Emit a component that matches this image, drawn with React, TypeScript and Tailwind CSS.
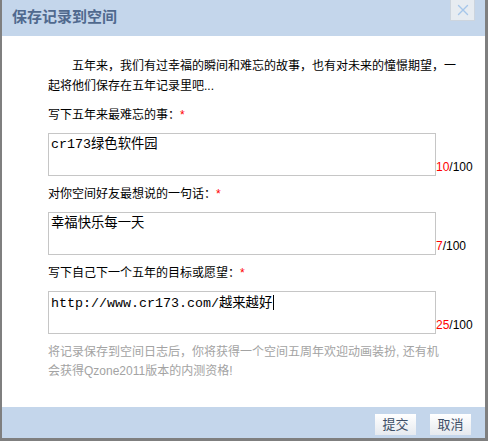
import React from "react";

const cjk = { fontFamily: '"Liberation Sans", "Noto Sans CJK SC", sans-serif' };
const mono = { fontFamily: '"Liberation Mono", "Noto Sans CJK SC", monospace' };

function Field({ label, value, count, caret }: { label: string; value: string; count: string; caret?: boolean }) {
  return (
    <div className="flex flex-col">
      <div className="h-[20px] leading-[20px] text-[12px] text-black">
        {label}
        <span className="text-[#ff0000]">*</span>
      </div>
      <div className="mt-[8px] flex items-end">
        <div
          className="w-[388px] h-[43px] border border-[#c6c6c6] bg-white px-[2px] pt-[3px] text-[13.333px] leading-[16px] text-black"
          style={mono}
        >
          {value}
          {caret && <span className="inline-block w-[1px] h-[15px] bg-black align-[-3px] ml-[1px]" />}
        </div>
        <div className="text-[12px] leading-[14px] mb-[2px]" style={cjk}>
          <span className="text-[#ff0000]">{count}</span>
          <span className="text-black">/100</span>
        </div>
      </div>
    </div>
  );
}

export default function App() {
  return (
    <div className="w-[488px] h-[441px] bg-[#7f7f7f] overflow-hidden pl-[2px]" style={cjk}>
      <div className="w-[483px] h-[438px] bg-white flex flex-col">
        <div className="h-[36px] bg-[#c4d6eb] flex items-start justify-between">
          <div className="pl-[10px] pt-[7px] text-[15px] leading-[20px] font-bold text-[#50698e]">保存记录到空间</div>
          <div className="mr-[10px] w-[25px] h-[21px] bg-[#e7ecf1] border border-[#cdd5de] border-t-0 flex items-center justify-center">
            <svg width="12" height="12" viewBox="0 0 12 12">
              <path d="M1.5 1.5 L10.5 10.5 M10.5 1.5 L1.5 10.5" stroke="#a6c6ea" strokeWidth="1.4" strokeLinecap="round" />
            </svg>
          </div>
        </div>
        <div className="flex-1 flex flex-col pl-[46px] pt-[20px]">
          <p className="w-[412px] text-[12px] leading-[20px] text-black indent-[24px]">
            五年来，我们有过幸福的瞬间和难忘的故事，也有对未来的憧憬期望，一起将他们保存在五年记录里吧...
          </p>
          <div className="mt-[9px] flex flex-col gap-[8px]">
            <Field label="写下五年来最难忘的事：" value="cr173绿色软件园" count="10" />
            <Field label="对你空间好友最想说的一句话：" value="幸福快乐每一天" count="7" />
            <Field label="写下自己下一个五年的目标或愿望：" value="http://www.cr173.com/越来越好" count="25" caret />
          </div>
          <p className="mt-[9px] w-[395px] text-[12px] leading-[19px] text-[#a3a3a3]">
            将记录保存到空间日志后，你将获得一个空间五周年欢迎动画装扮, 还有机会获得Qzone2011版本的内测资格!
          </p>
        </div>
        <div className="h-[31px] bg-[#c4d6eb] flex justify-end items-start pt-[7px] pr-[14px] gap-[14px]">
          <button className="w-[41px] h-[21px] bg-gradient-to-b from-white to-[#e6eaef] text-[13px] leading-[21px] text-[#3d4e66]">提交</button>
          <button className="w-[41px] h-[21px] bg-gradient-to-b from-white to-[#e6eaef] text-[13px] leading-[21px] text-[#3d4e66]">取消</button>
        </div>
      </div>
    </div>
  );
}
